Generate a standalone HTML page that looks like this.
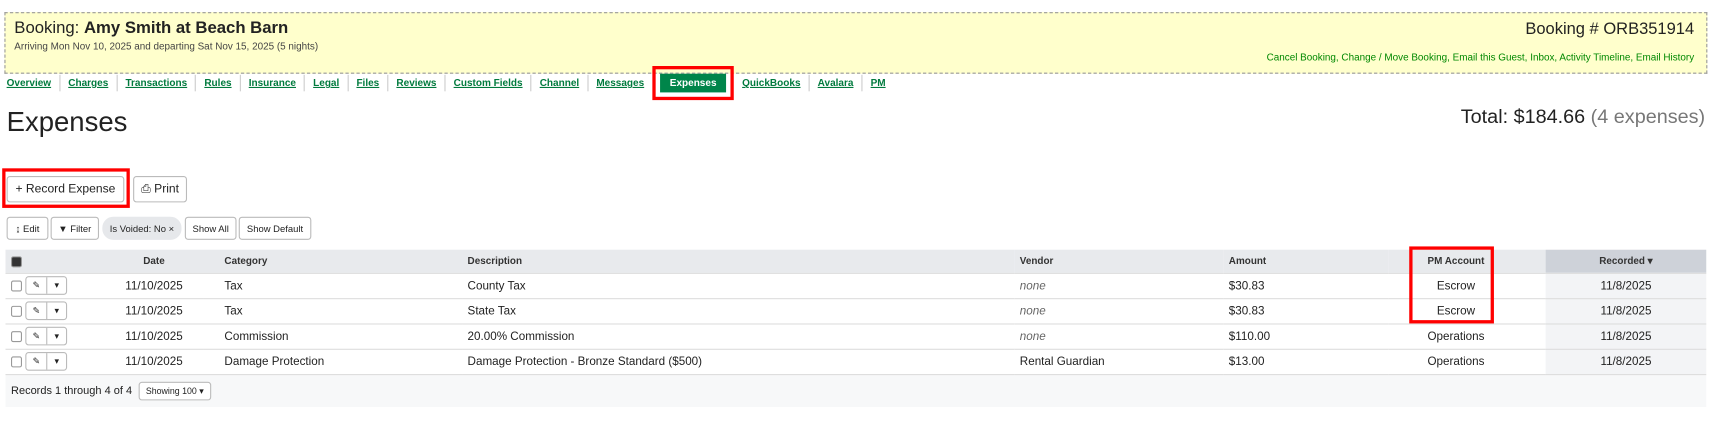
<!DOCTYPE html>
<html><head><style>
*{box-sizing:border-box;margin:0;padding:0}
body{width:1726px;height:421px;background:#fff;font-family:"Liberation Sans",Arial,sans-serif;color:#222;overflow:hidden}
#w{position:relative;width:1569px;height:383px;transform:scale(1.1001);transform-origin:0 0}
.abs{position:absolute}
.hdr{left:4px;top:11px;width:1548px;height:56px;background:#ffffcc;border:1px dashed #999}
.nav{top:67px;left:6px;font-size:9.1px;font-weight:bold;display:flex;align-items:center;height:17px}
.nav a{color:#007a3d;text-decoration:underline;padding:0 7.3px;border-left:1px solid #ccc;line-height:15px}
.nav a:first-child{border-left:none;padding-left:0}
.nav a.act{background:#00854a;color:#fff;text-decoration:none;padding:1px 9px;border:none;margin:0 7px 0 7px;outline:3px solid #f00;outline-offset:4px}
.red{border:3px solid #f00}
.btn{border:1px solid #bbb;border-radius:3px;background:#fff;font-size:11px;display:flex;align-items:center;justify-content:center}
.sb{border:1px solid #bbb;border-radius:3px;background:#fff;font-size:8.6px;height:21px;top:197px;display:flex;align-items:center;justify-content:center}
table{position:absolute;left:5px;top:227px;width:1546px;border-collapse:collapse;font-size:10.6px;table-layout:fixed}
th{background:#e8eaed;font-size:9px;font-weight:bold;height:21px;text-align:left;color:#333}
td{height:23px;border-top:1px solid #ddd}
.rc{background:#f3f4f6;text-align:center}
th.rc{background:#ced2d9}
.i{color:#666;font-style:italic}
.cb{display:inline-block;width:10px;height:10px;border:1px solid #999;border-radius:2px;vertical-align:middle}
.eb{display:inline-flex;border:1px solid #bbb;border-radius:3px;height:17px;vertical-align:middle;margin-left:3px}
.eb span{width:18px;display:flex;align-items:center;justify-content:center;font-size:8px}
.c{text-align:center}
.p19{padding-left:19px}.p5{padding-left:5px}
.pm{text-align:center;padding-right:20px}
</style></head><body><div id="w">
<div class="abs hdr"></div>
<div class="abs" style="left:13px;top:17px;font-size:15.2px">Booking: <b>Amy Smith at Beach Barn</b></div>
<div class="abs" style="left:13px;top:37px;font-size:9px;color:#444">Arriving Mon Nov 10, 2025 and departing Sat Nov 15, 2025 (5 nights)</div>
<div class="abs" style="right:29px;top:18px;font-size:15px">Booking # ORB351914</div>
<div class="abs" style="right:29px;top:47px;font-size:9px;color:#080">Cancel Booking, Change / Move Booking, Email this Guest, Inbox, Activity Timeline, Email History</div>
<div class="abs nav"><a>Overview</a><a>Charges</a><a>Transactions</a><a>Rules</a><a>Insurance</a><a>Legal</a><a>Files</a><a>Reviews</a><a>Custom Fields</a><a>Channel</a><a>Messages</a><a class="act">Expenses</a><a style="border-left:none">QuickBooks</a><a>Avalara</a><a>PM</a></div>
<div class="abs" style="left:6px;top:97px;font-size:25px">Expenses</div>
<div class="abs" style="right:19px;top:96px;font-size:18px">Total: $184.66 <span style="color:#777">(4 expenses)</span></div>
<div class="abs btn" style="left:6px;top:160px;width:107px;height:24px">+ Record Expense</div>
<div class="abs red" style="left:2px;top:153px;width:116px;height:36px"></div>
<div class="abs btn" style="left:121px;top:160px;width:49px;height:24px">⎙ Print</div>
<div class="abs sb" style="left:6px;width:38px">↨ Edit</div>
<div class="abs sb" style="left:46px;width:44px">▼ Filter</div>
<div class="abs sb" style="left:93px;width:72px;background:#e6e8eb;border-color:#e6e8eb;border-radius:10px">Is Voided: No ×</div>
<div class="abs sb" style="left:168px;width:47px">Show All</div>
<div class="abs sb" style="left:217px;width:66px">Show Default</div>
<table>
<colgroup><col style="width:90px"><col style="width:90px"><col style="width:235px"><col style="width:502px"><col style="width:190px"><col style="width:150px"><col style="width:143px"><col style="width:146px"></colgroup>
<tr><th style="padding-left:5px"><span class="cb" style="background:#333"></span></th><th class="c">Date</th><th class="p19">Category</th><th class="p5">Description</th><th class="p5">Vendor</th><th class="p5">Amount</th><th class="pm">PM Account</th><th class="rc">Recorded ▾</th></tr>
<tr><td style="padding-left:5px"><span class="cb"></span><span class="eb"><span>✎</span><span style="border-left:1px solid #bbb">▾</span></span></td><td class="c">11/10/2025</td><td class="p19">Tax</td><td class="p5">County Tax</td><td class="p5 i">none</td><td class="p5">$30.83</td><td class="pm">Escrow</td><td class="rc">11/8/2025</td></tr>
<tr><td style="padding-left:5px"><span class="cb"></span><span class="eb"><span>✎</span><span style="border-left:1px solid #bbb">▾</span></span></td><td class="c">11/10/2025</td><td class="p19">Tax</td><td class="p5">State Tax</td><td class="p5 i">none</td><td class="p5">$30.83</td><td class="pm">Escrow</td><td class="rc">11/8/2025</td></tr>
<tr><td style="padding-left:5px"><span class="cb"></span><span class="eb"><span>✎</span><span style="border-left:1px solid #bbb">▾</span></span></td><td class="c">11/10/2025</td><td class="p19">Commission</td><td class="p5">20.00% Commission</td><td class="p5 i">none</td><td class="p5">$110.00</td><td class="pm">Operations</td><td class="rc">11/8/2025</td></tr>
<tr><td style="padding-left:5px"><span class="cb"></span><span class="eb"><span>✎</span><span style="border-left:1px solid #bbb">▾</span></span></td><td class="c">11/10/2025</td><td class="p19">Damage Protection</td><td class="p5">Damage Protection - Bronze Standard ($500)</td><td class="p5">Rental Guardian</td><td class="p5">$13.00</td><td class="pm">Operations</td><td class="rc">11/8/2025</td></tr>
<tr><td colspan="8" style="height:30px;background:#f7f8f9;padding-left:5px;font-size:10px">Records 1 through 4 of 4 &nbsp;<span style="border:1px solid #bbb;border-radius:3px;padding:3px 6px;font-size:8px;background:#fff">Showing 100 ▾</span></td></tr>
</table>
<div class="abs red" style="left:1281px;top:224px;width:77px;height:70px"></div>
</div></body></html>
